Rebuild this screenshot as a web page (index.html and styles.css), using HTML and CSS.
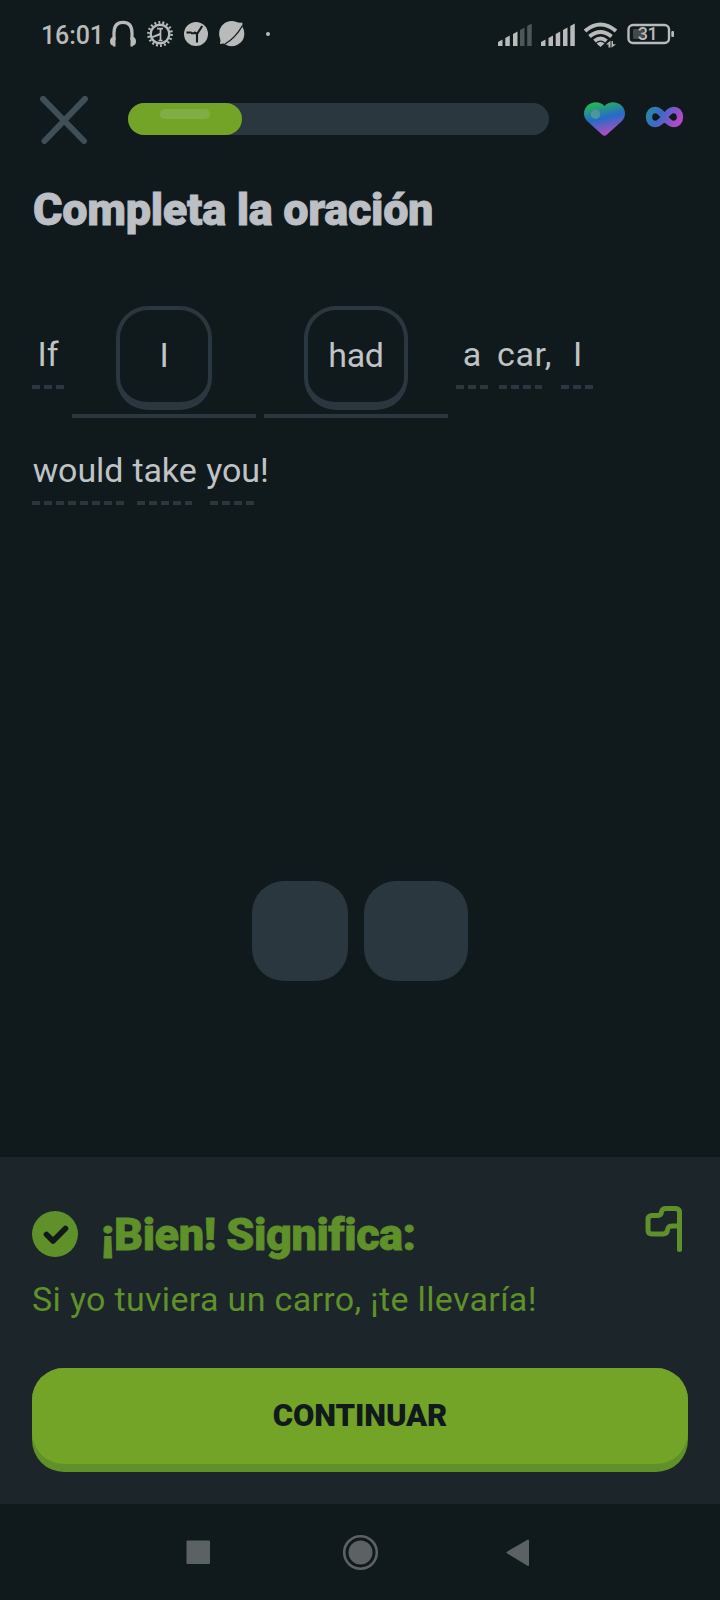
FILE: index.html
```html
<!DOCTYPE html>
<html lang="es">
<head>
<meta charset="utf-8">
<title>Completa la oración</title>
<link rel="stylesheet" href="styles.css">
</head>
<body>
<div class="screen">
  <div class="status">
    <span class="clock">16:01</span>
    <svg class="status-left" width="170" height="40" viewBox="108 14 170 40" fill="none" stroke="#b9bbbb">
      <path d="M114 40V33C114 26 117 22.300 123 22.300S132 26 132 33V40" stroke-width="3.200"/>
      <path d="M115.500 37v9.500h-2.500v-1c-2 0-3-2-3-4.300s1.500-4.200 3-4.200zM130.500 37v9.500h2.500v-1c2 0 3-2 3-4.300s-1.500-4.200-3-4.200z" fill="#b9bbbb" stroke="none"/>
      <circle cx="160" cy="34" r="9.300" stroke-width="2.400"/>
      <circle cx="160" cy="34" r="11.600" stroke-width="2.600" stroke-dasharray="1.900 2.149"/>
      <path d="M157 28.700h6M160.500 29v11.500M158.500 40.500h4" stroke-width="1.700"/>
      <path d="M151.500 36.500L161 32.500V35L152.500 38Z" fill="#b9bbbb" stroke="none"/>
      <circle cx="196" cy="34" r="12" fill="#b9bbbb" stroke="none"/>
      <path d="M197 42.500V34l5.200-8M197 33.800l-3-1.500M194.500 33.200h-3.500M191.500 32.500h-5" stroke="#10191b" stroke-width="2.100"/>
      <circle cx="231.700" cy="33.700" r="12.600" fill="#b9bbbb" stroke="none"/>
      <path d="M234 22.500l8.500.3-.5 6zM221 36l-1 8 7-1z" fill="#b9bbbb" stroke="none"/>
      <path d="M225 44C231 40.500 238 33.500 242.500 25.500" stroke="#10191b" stroke-width="1.300"/>
      <circle cx="268" cy="34" r="2" fill="#b9bbbb" stroke="none"/>
    </svg>
    <svg class="status-right" width="180" height="40" viewBox="496 14 180 40" fill="#b9bbbb">
      <path d="M498 42l4.500-2.500V46H498zM505.300 38l4.500-2.500V46h-4.500zM513 34l4.500-2.500V46H513z"/>
      <path d="M520 30l4.500-2.500V46H520zM527.200 26l4.500-2.500V46h-4.500z" opacity=".38"/>
      <path d="M541 42l4.500-2.500V46H541zM548.500 38l4.500-2.500V46h-4.500zM555.700 34l4.500-2.500V46h-4.500zM563 30l4.500-2.500V46H563zM570.300 26l4.500-2.500V46h-4.500z"/>
      <path d="M585 31q15.500-13 31 0M589.500 36.500q11-9 22 0M594.500 41q6-5 12 0" fill="none" stroke="#b9bbbb" stroke-width="4"/>
      <path d="M596.500 43.500q4-3.500 8 0l-4 3.500zM606 44.500l4.500-4v7h-2v-3zM611.500 41h1.500v3.300h3l-4.500 3.500z"/>
      <rect x="628.500" y="25" width="40.500" height="18" rx="4.500" fill="none" stroke="#b9bbbb" stroke-width="2.400"/>
      <rect x="633" y="29" width="11" height="10" rx="1.500" opacity=".3"/>
      <rect x="671.300" y="31" width="2.700" height="6" rx="1"/>
      <text class="battery" x="647.500" y="40.300" text-anchor="middle">31</text>
    </svg>
  </div>

  <div class="topbar">
    <svg width="48" height="48" viewBox="0 0 48 48" fill="none" stroke="#404e56" stroke-width="6" stroke-linecap="round"><path d="M3 2.800L44 45M45 2.800L4.500 45"/></svg>
    <div class="progress"><div class="fill"><i class="shine"></i></div></div>
    <svg class="lives" width="101" height="36" viewBox="583 101 101 36">
      <defs>
        <linearGradient id="heart" x1="0" y1="0" x2=".3" y2="1"><stop offset=".08" stop-color="#28b84e"/><stop offset=".56" stop-color="#246bc9"/><stop offset="1" stop-color="#aa4fc0"/></linearGradient>
        <linearGradient id="inf" x1="646" y1="107" x2="681" y2="126" gradientUnits="userSpaceOnUse"><stop stop-color="#23929c"/><stop offset=".4" stop-color="#3c69c7"/><stop offset="1" stop-color="#ca42cb"/></linearGradient>
      </defs>
      <path d="M604.500 106C600 101 592 101 587 106C583 110 583 117 587 121L602 134.500Q604.500 137 607 134.500L622 121C626 117 626 110 622 106C617 101 609 101 604.500 106Z" fill="url(#heart)"/>
      <circle cx="595.500" cy="114.300" r="4.700" fill="#4d969f"/>
      <path d="M664.500 117C661 112.500 659 110 655.500 110C651.500 110 649 113 649 117S651.500 124 655.500 124C659 124 661 121.500 664.500 117S670 110 673.500 110C677.500 110 680 113 680 117S677.500 124 673.500 124C670 124 668 121.500 664.500 117Z" fill="none" stroke="url(#inf)" stroke-width="6.400"/>
    </svg>
  </div>

  <h1 class="title">Completa la oración</h1>

  <div class="sentence">
    <div class="line">
      <span class="word w-if">If</span>
      <span class="slot"><span class="token t-i">I</span></span>
      <span class="slot"><span class="token t-had">had</span></span>
      <span class="word w-a">a</span>
      <span class="word w-car">car,</span>
      <span class="word w-i">I</span>
    </div>
    <div class="line">
      <span class="word w-would">would</span>
      <span class="word w-take">take</span>
      <span class="word w-you">you!</span>
    </div>
  </div>

  <div class="bank"><div class="blank"></div><div class="blank wide"></div></div>

  <div class="panel">
    <div class="verdict">
      <svg width="46" height="46" viewBox="0 0 46 46"><circle cx="23" cy="23" r="23" fill="#5f9029"/><path d="M14.500 23.500L21 30L33.500 17.500" fill="none" stroke="#10191b" stroke-width="5.600" stroke-linecap="round" stroke-linejoin="round"/></svg>
      <h2 class="bien">¡Bien! Significa:</h2>
      <svg class="flag" width="38" height="47" viewBox="645 1205 38 47" fill="none" stroke="#5f9029" stroke-width="5" stroke-linecap="round" stroke-linejoin="round"><path d="M679.500 1249.500V1212.500Q679.500 1208.500 675.500 1208.500H666Q662 1208.500 661.500 1212C661 1215 660 1215.500 657 1215.500H652Q648 1215.500 648 1219.500V1230Q648 1234 652 1234H663Q667 1234 667.500 1230C668 1226.500 669 1226 673 1226H679"/></svg>
    </div>
    <p class="meaning">Si yo tuviera un carro, ¡te llevaría!</p>
    <button class="continue"><span>CONTINUAR</span></button>
  </div>

  <div class="nav">
    <svg width="720" height="96" viewBox="0 1504 720 96" fill="#5c6163">
      <rect x="186.500" y="1540.500" width="23.500" height="23.500" rx="1"/>
      <circle cx="360.500" cy="1552.500" r="12"/>
      <circle cx="360.500" cy="1552.500" r="16.300" fill="none" stroke="#5c6163" stroke-width="2.600"/>
      <path d="M507.500 1552.500L528 1540.500V1565Z" stroke="#5c6163" stroke-width="2" stroke-linejoin="round"/>
    </svg>
  </div>
</div>
</body>
</html>
```
FILE: styles.css
```css
* { box-sizing: border-box; }
body { margin: 0; background: #10191b; font-family: Roboto, "Liberation Sans", sans-serif; }
.screen { width: 720px; height: 1600px; display: flex; flex-direction: column; overflow: hidden; }
svg { display: block; flex: none; }

.status { height: 94px; padding: 14px 44px 0 41px; display: flex; align-items: flex-start; }
.clock { width: 67px; padding-top: 1px; font-size: 25px; line-height: 42px; font-weight: 500; letter-spacing: -.1px; color: #b9bbbb; white-space: nowrap; }
.status-right { margin-left: auto; }
.battery { font-size: 18px; font-weight: 500; letter-spacing: -.4px; }

.topbar { height: 52px; padding: 2px 36px 0 40px; display: flex; align-items: flex-start; }
.progress { width: 421px; height: 32px; margin: 7px 0 0 40px; border-radius: 16px; background: #2b373e; }
.fill { width: 114px; height: 32px; padding: 6px 0 0 32px; border-radius: 16px; background: #73a427; }
.shine { display: block; width: 50px; height: 10px; border-radius: 5px; background: #82ad44; }
.lives { margin: 5px 0 0 34px; }

.title { margin: 34px 0 0 33px; height: 60px; font-size: 45px; line-height: 60px; font-weight: 900; letter-spacing: -.3px; color: #bcc0c4; white-space: nowrap; -webkit-text-stroke: .8px #bcc0c4; }

.sentence { margin-top: 66px; padding-left: 32px; font-size: 34px; line-height: 40px; color: #bfc3c5; }
.line { display: flex; align-items: flex-start; height: 116px; }
.word { display: flex; justify-content: center; height: 55px; margin-top: 28px; white-space: nowrap; letter-spacing: -.1px;
  background: repeating-linear-gradient(90deg, #2b373e 0 8px, transparent 8px 12px) left bottom / 100% 4px no-repeat; }
.w-if { width: 32px; }
.w-a { width: 32px; margin-left: 8px; }
.w-car { width: 43px; margin-left: 11px; padding-left: 8px; letter-spacing: .6px; }
.w-i { width: 32px; margin-left: 19px; padding-left: 1px; }
.w-would { width: 92px; }
.w-take { width: 55px; margin-left: 13px; }
.w-you { width: 44px; margin-left: 18px; padding-left: 11px; }
.slot { display: flex; justify-content: center; width: 184px; height: 112px; margin-left: 8px; border-bottom: 4px solid #2b373e; }
.token { height: 104px; padding-top: 25px; text-align: center; border: 4px solid #2b373e; border-bottom-width: 8px; border-radius: 32px; }
.t-i { width: 96px; }
.t-had { width: 104px; letter-spacing: -.3px; }

.bank { display: flex; justify-content: center; gap: 16px; margin-top: 343px; }
.blank { width: 96px; height: 100px; border-radius: 32px; background: #2b373e; }
.wide { width: 104px; }

.panel { height: 347px; margin-top: auto; padding: 48px 32px 0; background: #1b252a; color: #5f9029; }
.verdict { display: flex; align-items: flex-start; height: 68px; }
.verdict > svg:first-child { margin-top: 6px; }
.bien { margin: 0 0 0 23px; font-size: 45px; line-height: 60px; font-weight: 900; letter-spacing: -.45px; white-space: nowrap; -webkit-text-stroke: .8px #5f9029; }
.flag { margin-left: auto; margin-right: 5px; }
.meaning { margin: 6px 0 0; height: 40px; font-size: 34px; line-height: 40px; letter-spacing: .33px; white-space: nowrap; }
.continue { display: block; width: 656px; height: 104px; margin-top: 49px; padding: 0; border: 0; border-radius: 32px; background: #5f9029; font-family: inherit; }
.continue span { display: block; height: 96px; margin-bottom: 8px; border-radius: 32px; background: #73a427; color: #10191b; font-size: 31px; line-height: 96px; font-weight: 900; letter-spacing: -.1px; }
.nav { height: 96px; }
```
